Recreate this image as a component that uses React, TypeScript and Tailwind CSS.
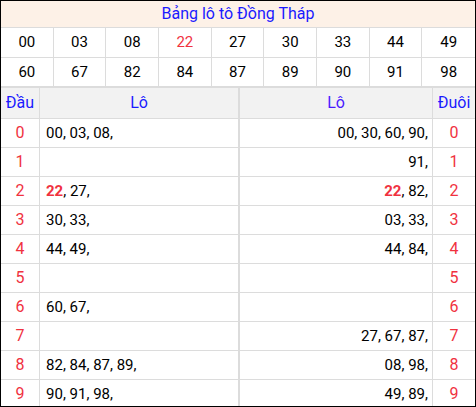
import React from "react";

const row1 = ["00", "03", "08", "22", "27", "30", "33", "44", "49"];
const row2 = ["60", "67", "82", "84", "87", "89", "90", "91", "98"];

const dau: string[][] = [
  ["00", "03", "08"],
  [],
  ["22", "27"],
  ["30", "33"],
  ["44", "49"],
  [],
  ["60", "67"],
  [],
  ["82", "84", "87", "89"],
  ["90", "91", "98"],
];
const duoi: string[][] = [
  ["00", "30", "60", "90"],
  ["91"],
  ["22", "82"],
  ["03", "33"],
  ["44", "84"],
  [],
  [],
  ["27", "67", "87"],
  ["08", "98"],
  ["49", "89"],
];

function Nums({ list }: { list: string[] }) {
  return (
    <span className="whitespace-pre text-[15px]">
      {list.map((n, i) => (
        <React.Fragment key={i}>
          {i > 0 ? " " : ""}
          {n === "22" ? <span className="font-bold text-[#f0323f]">{n}</span> : <span>{n}</span>}
          {","}
        </React.Fragment>
      ))}
    </span>
  );
}

export default function App() {
  return (
    <div
      className="w-[476px] h-[407px] border border-black overflow-hidden bg-white text-[16px] text-black"
      style={{ fontFamily: "Roboto, 'Noto Sans', sans-serif" }}
    >
      <div className="h-[27px] bg-[#fdf1e7] border-b border-[#dcdcdc] flex items-center justify-center text-[#1a1aff]">
        Bảng lô tô Đồng Tháp
      </div>
      <div className="grid grid-cols-9 text-[15px]">
        {row1.map((n, i) => (
          <div
            key={i}
            className={`h-[30px] flex items-center justify-center border-b border-[#dcdcdc] ${i < 8 ? "border-r" : ""} ${n === "22" ? "text-[#f0323f]" : ""}`}
          >
            {n}
          </div>
        ))}
        {row2.map((n, i) => (
          <div
            key={i}
            className={`h-[29px] flex items-center justify-center border-b border-[#dcdcdc] ${i < 8 ? "border-r" : ""}`}
          >
            {n}
          </div>
        ))}
      </div>
      <div className="flex h-[32px] border-t border-b border-[#dcdcdc] bg-[#f2f2f2] text-[#1a1aff]">
        <div className="w-[39px] border-r border-[#dcdcdc] flex items-center justify-center">Đầu</div>
        <div className="w-[200px] border-r-2 border-[#dcdcdc] flex items-center justify-center">Lô</div>
        <div className="w-[193px] border-r border-[#dcdcdc] flex items-center justify-center text-[#4a1aff]">Lô</div>
        <div className="flex-1 flex items-center justify-center">Đuôi</div>
      </div>
      {dau.map((list, i) => (
        <div key={i} className="flex h-[29px] border-b border-[#dcdcdc]">
          <div className="w-[39px] border-r border-[#dcdcdc] flex items-center justify-center text-[#f0323f]">{i}</div>
          <div className="w-[200px] border-r-2 border-[#dcdcdc] flex items-center pl-[6px]">
            <Nums list={list} />
          </div>
          <div className="w-[193px] border-r border-[#dcdcdc] flex items-center justify-end pr-[4px]">
            <Nums list={duoi[i]} />
          </div>
          <div className="flex-1 flex items-center justify-center text-[#f0323f]">{i}</div>
        </div>
      ))}
    </div>
  );
}
